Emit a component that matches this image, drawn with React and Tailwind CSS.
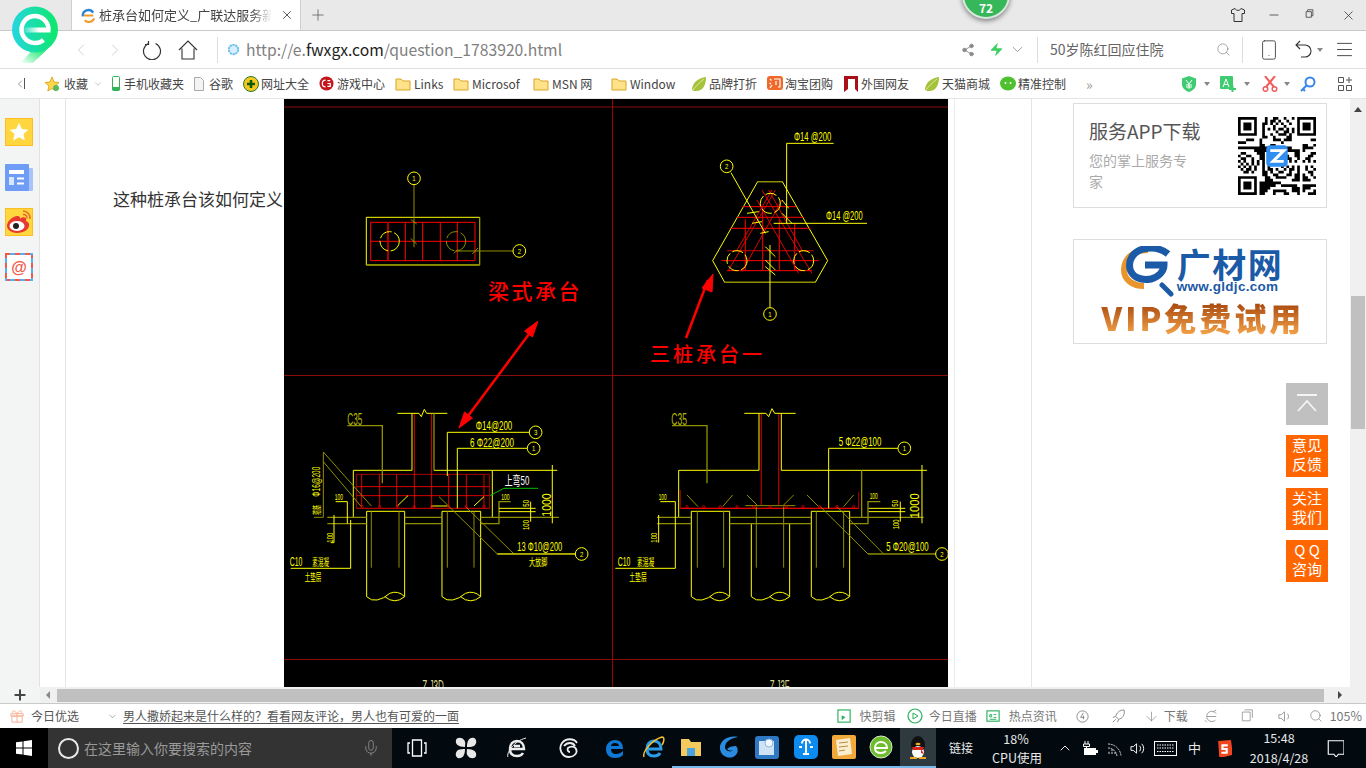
import React from "react";
import { ChevronLeft, ChevronRight, ChevronDown, Search, Plus, Minus, X, Mic, ChevronUp, Share2, Zap, Smartphone, Menu, ArrowDown } from "lucide-react";

const Y = "#ffff00";
const O = "#8f8f00";
const R = "#ff0000";
const D = "#a80000";

const Ic = ({ s = 16, w, h, vb = "0 0 16 16", children }) => (
  <svg width={w || s} height={h || s} viewBox={vb} fill="none" className="shrink-0">{children}</svg>
);

const Folder = () => (
  <Ic>
    <path d="M1 3h5l2 2h7v9H1z" fill="#ffe28a" stroke="#d9a520" />
  </Ic>
);
const Leaf = () => (
  <Ic>
    <path d="M1 14C1 7 7 2 15 1c0 8-3 14-10 14-2 0-3-.5-4-1z" fill="#a4c23a" />
    <path d="M2 14c3-4 6-7 11-11" stroke="#dfe99a" />
  </Ic>
);

const bookmarks = [
  { w: "w-[68px]", label: "收藏", gap: "ml-[4px]", caret: true, icon: <Ic><path d="M8 1l2 5 5 .5-4 3.500 1.200 5L8 12.500 3.800 15 5 10 1 6.500 6 6z" fill="#ffd84a" stroke="#e0a92a" /><circle cx="12" cy="12" r="3" fill="#5cb85c" /></Ic> },
  { w: "w-[82px]", label: "手机收藏夹", gap: "ml-[4px]", icon: <Ic w={8} h={15} vb="0 0 8 15"><rect x=".5" y=".5" width="7" height="14" rx="1" stroke="#2fb457" fill="#fff" /><rect x=".5" y="11" width="7" height="3.500" fill="#2fb457" /></Ic> },
  { w: "w-[49px]", label: "谷歌", gap: "ml-[5px]", icon: <Ic w={10} h={14} vb="0 0 10 14"><path d="M.5.5h6l3 3v10H.5z" fill="#f4f4f4" stroke="#aaa" /></Ic> },
  { w: "w-[76px]", label: "网址大全", gap: "ml-[2px]", icon: <Ic><circle cx="8" cy="8" r="7.500" fill="#f4c81d" stroke="#2a7a2a" /><path d="M8 4v8M4 8h8" stroke="#0b5a0b" strokeWidth="2.500" /></Ic> },
  { w: "w-[76px]", label: "游戏中心", gap: "ml-[3px]", icon: <Ic s={15} vb="0 0 16 16"><circle cx="8" cy="8" r="7.500" fill="#c4161c" /><path d="M7 4.500a3.500 3.500 0 1 0 0 7M9 5h3M9 8h3v3H9" stroke="#fff" strokeWidth="1.300" /></Ic> },
  { w: "w-[58px]", label: "Links", gap: "ml-[3px]", icon: <Folder /> },
  { w: "w-[80px]", label: "Microsof", gap: "ml-[3px]", icon: <Folder /> },
  { w: "w-[78px]", label: "MSN 网", gap: "ml-[3px]", icon: <Folder /> },
  { w: "w-[80px]", label: "Window", gap: "ml-[3px]", icon: <Folder /> },
  { w: "w-[76px]", label: "品牌打折", gap: "ml-[2px]", icon: <Leaf /> },
  { w: "w-[77px]", label: "淘宝团购", gap: "ml-[2px]", icon: <Ic><rect width="16" height="14" rx="3" fill="#f0692a" /><path d="M3 3l1.500 1.500M2.500 7L4 8M3 12l2-3M7 3h6v8h-2M9 5v4" stroke="#fff" strokeWidth="1.200" /></Ic> },
  { w: "w-[80px]", label: "外国网友", gap: "ml-[3px]", icon: <Ic w={14} h={16} vb="0 0 14 16"><path d="M0 0h14v16l-3-3V3H4v10l-4 3z" fill="#a8101a" /></Ic> },
  { w: "w-[76px]", label: "天猫商城", gap: "ml-[2px]", icon: <Leaf /> },
  { w: "w-[85px]", label: "精准控制", gap: "ml-[2px]", icon: <Ic><ellipse cx="8" cy="7.500" rx="8" ry="7" fill="#4fc02f" /><path d="M3 13l1-3 2 3z" fill="#4fc02f" /><circle cx="5.500" cy="7" r="1" fill="#fff" /><circle cx="10.500" cy="7" r="1" fill="#fff" /></Ic> },
];

const QR = () => {
  const n = 29;
  let d = "";
  const finder = (x, y) => (x < 7 && y < 7) || (x >= n - 7 && y < 7) || (x < 7 && y >= n - 7);
  const inF = (x, y) => (x < 8 && y < 8) || (x >= n - 8 && y < 8) || (x < 8 && y >= n - 8);
  for (let y = 0; y < n; y++) {
    for (let x = 0; x < n; x++) {
      let on = ((x * 7 + y * 13 + x * y * 3 + (x ^ y) * 5) % 7) < 3;
      if (inF(x, y)) {
        on = false;
        if (finder(x, y)) {
          const fx = x >= n - 7 ? x - (n - 7) : x;
          const fy = y >= n - 7 ? y - (n - 7) : y;
          on = fx === 0 || fx === 6 || fy === 0 || fy === 6 || (fx >= 2 && fx <= 4 && fy >= 2 && fy <= 4);
        }
      }
      if (on) d += `M${x} ${y}h1v1h-1z`;
    }
  }
  return (
    <svg width="78" height="78" viewBox="0 0 29 29" className="shrink-0">
      <path d={d} fill="#000" />
      <rect x="10.500" y="10.500" width="8" height="8" rx="1.500" fill="#2f8ef0" />
      <path d="M12 12.500h5l-4 4h4" stroke="#fff" strokeWidth="1.100" fill="none" />
    </svg>
  );
};

const CadText = ({ x, y, w, size = 40, fill = Y, rot, children }) => (
  <text
    x={x}
    y={y}
    fontSize={size}
    fill={fill}
    textLength={w}
    lengthAdjust="spacingAndGlyphs"
    transform={rot ? `rotate(-90 ${x} ${y})` : undefined}
    fontFamily="'Liberation Sans','Noto Sans CJK SC',sans-serif"
  >
    {children}
  </text>
);

const Bubble = ({ cx, cy, t }) => (
  <>
    <circle cx={cx} cy={cy} r="19" stroke={Y} strokeWidth="3" fill="none" />
    <CadText x={cx - 5} y={cy + 8} size={22} w={10}>{t}</CadText>
  </>
);

const pileEnd = (l, r) => {
  const m = (r - l) / 115;
  const X = (v) => l + v * m;
  return `M${X(0)} 650Q${X(14)} 664 ${X(32)} 660Q${X(52)} 656 ${X(70)} 640Q${X(95)} 630 ${X(115)} 650M${X(55)} 650Q${X(85)} 675 ${X(115)} 650`;
};

const Dots = ({ xs, y = 380 }) => xs.map((x) => <circle key={x} cx={x} cy={y} r="3.500" stroke={R} strokeWidth="2" fill="none" />);

const Drawing = () => (
  <svg width="664" height="588" viewBox="284 99 664 588" className="shrink-0 bg-black" fill="none">
    <path d="M284 107H948M284 375.500H948M284 659.500H948" stroke="#8a0c0c" />
    <path d="M612.500 99V687" stroke="#a00000" />

    {/* beam cap, plan */}
    <g transform="translate(284 100) scale(.3333)" strokeWidth="3">
      <path d="M247 352H587V495H247Z" stroke={Y} />
      <path d="M587 352V495H247" stroke={O} />
      <path d="M260 367H573V482H260ZM260 424H573M364 367V482M416 367V482M469 367V482M520 367V482" stroke={R} />
      <path d="M312 367V482" stroke={D} strokeWidth="6" />
      <circle cx="317" cy="424" r="29" stroke={Y} strokeDasharray="42 8" />
      <circle cx="516" cy="424" r="29" stroke={O} strokeDasharray="42 8" />
      <path d="M390 254V442M380 358L398 372M380 415L398 432M515 453H688M510 460L522 448M565 462L582 444" stroke={O} />
      <Bubble cx={390} cy={235} t="1" />
      <Bubble cx={706} cy={453} t="2" />
    </g>

    {/* three pile cap, plan */}
    <g transform="translate(612 100) scale(.3333)" strokeWidth="3">
      <path d="M437 245H511L647 482L610 547H338L302 482Z" stroke={Y} />
      <path d="M338 547H610M437 245H511" stroke={O} strokeWidth="4" />
      <path d="M392 320H553M375 352H575M355 385H595M328 482H620M345 512H600M400 358V510M452 320V510M502 360V510M548 370V510" stroke={R} />
      <path d="M345 452H605" stroke={D} strokeWidth="4" />
      <path d="M450 270L600 520M490 270L350 510M435 300L560 520M510 300L390 515M470 270L570 450M480 270L375 450" stroke="#e00000" />
      <circle cx="475" cy="310" r="30" stroke={Y} strokeDasharray="34 8" />
      <circle cx="375" cy="482" r="30" stroke={Y} strokeDasharray="34 8" />
      <circle cx="575" cy="482" r="30" stroke={Y} strokeDasharray="34 8" />
      <path d="M357 218L460 400M474 435V623M524 370V130H665M485 370H765M405 340L440 335M420 370L450 365M445 400L470 395M460 440L490 470M460 480L490 510M460 500L490 525M510 300L530 325M510 340L540 370" stroke={Y} />
      <Bubble cx={344} cy={199} t="2" />
      <Bubble cx={474} cy={642} t="1" />
      <CadText x={546} y={124} w={112} size={40}>Φ14 @200</CadText>
      <CadText x={642} y={360} w={110} size={40}>Φ14 @200</CadText>
    </g>

    {/* beam cap, section */}
    <g transform="translate(284 380) scale(.3333)" strokeWidth="3">
      <path d="M217 283H617V385M217 283V385" stroke={D} />
      <path d="M217 385H617M217 320H617M217 347H617M391 100V385M443 100V385M233 283V380M287 283V380M338 283V380M494 283V380M547 283V380M600 283V380" stroke="#dd0000" />
      <path d="M340 100H405L412 110L421 88L428 100H490" stroke={Y} />
      <path d="M384 100V271H208V412M450 271H625V412" stroke={Y} />
      <path d="M450 100V271" stroke={O} strokeWidth="4" />
      <path d="M248 394H362V650M248 394V650M474 394H590V650M474 394V650" stroke={Y} />
      <path d={pileEnd(248, 362)} stroke={Y} />
      <path d={pileEnd(474, 590)} stroke={Y} />
      <path d="M262 394V563M345 394V563M490 394V563M570 394V563" stroke={O} />
      <path d="M130 412H248M362 412H474M590 412H825M130 431H248M362 431H474M590 431H645V365H680" stroke={O} strokeWidth="4" />
      <path d="M20 565H200V420M190 431V365H155M150 405V488H140" stroke={Y} />
      <path d="M190 137H295V310" stroke={O} strokeWidth="4" />
      <path d="M490 288V157H736M520 385V205H730" stroke={Y} />
      <path d="M465 350L640 522H874M545 380L690 522M118 216L262 378M118 245L232 380M118 216V412H90" stroke={O} />
      <path d="M640 522H874M340 378L372 347M570 378L600 350M442 378H490" stroke={Y} />
      <path d="M805 255V430M625 271H820M740 365V425M645 385H755M645 395H755" stroke={Y} />
      <path d="M618 347L660 325H762" stroke="#00c000" />
      <CadText x={662} y={316} w={74} size={38} fill="#fff">上弯50</CadText>
      <CadText x={190} y={134} w={45} size={48} fill="#b8b800">C35</CadText>
      <CadText x={575} y={149} w={110} size={40}>Φ14@200</CadText>
      <CadText x={558} y={200} w={132} size={40}>6 Φ22@200</CadText>
      <CadText x={700} y={512} w={135} size={40}>13 Φ10@200</CadText>
      <CadText x={735} y={558} w={55} size={30}>大放脚</CadText>
      <CadText x={17} y={559} w={38} size={38}>C10</CadText>
      <CadText x={85} y={559} w={50} size={30}>素混凝</CadText>
      <CadText x={62} y={602} w={50} size={30}>土垫层</CadText>
      <CadText x={152} y={361} w={25} size={26}>100</CadText>
      <CadText x={652} y={361} w={25} size={26}>100</CadText>
      <CadText x={107} y={405} w={30} size={28} rot>箍筋</CadText>
      <CadText x={107} y={350} w={90} size={30} rot>Φ16@200</CadText>
      <CadText x={800} y={410} w={70} size={38} rot>1000</CadText>
      <CadText x={735} y={380} w={20} size={26} rot>50</CadText>
      <CadText x={735} y={450} w={30} size={26} rot>100</CadText>
      <CadText x={148} y={488} w={30} size={26} rot>100</CadText>
      <Bubble cx={755} cy={157} t="3" />
      <Bubble cx={749} cy={205} t="1" />
      <Bubble cx={893} cy={522} t="2" />
      <Dots xs={[235, 287, 340, 391, 443, 494, 547, 600]} />
      <CadText x={415} y={935} w={65} size={48} fill="#d8d890">Z J3D</CadText>
    </g>

    {/* three pile cap, section */}
    <g transform="translate(612 380) scale(.3333)" strokeWidth="3">
      <path d="M448 100V375M500 100V375" stroke={D} strokeWidth="4" />
      <path d="M205 330V385H740V335" stroke={D} />
      <path d="M205 385H740" stroke={R} />
      <path d="M397 100H462L470 110L480 86L488 100H551M441 100V271H200V412M508 100V271H945" stroke={Y} />
      <path d="M749 271V412M180 137H285V310" stroke={O} strokeWidth="4" />
      <path d={pileEnd(238, 353)} stroke={Y} />
      <path d={pileEnd(418, 533)} stroke={Y} />
      <path d={pileEnd(598, 713)} stroke={Y} />
      <path d="M238 394H353V650M238 394V650M418 430V650M533 430V650M598 394H713V650M598 394V650" stroke={Y} />
      <path d="M256 394V563M335 394V563M433 380V563M515 380V563M613 394V563M695 394V563" stroke={O} />
      <path d="M135 412H238M353 412H598M713 412H935M135 431H238M353 431H598M713 431H768V365H805" stroke={O} strokeWidth="4" />
      <path d="M10 565H190V365H145M140 405V488M650 385V205H858" stroke={Y} />
      <path d="M625 380L768 522H972M675 380L815 522" stroke={O} />
      <path d="M768 522H972M225 345L258 380M362 345L332 380M405 345L435 375M545 345L515 375M585 345L620 380M725 345L695 380M400 377H550" stroke={O} />
      <path d="M930 255V430M770 385H880M770 395H880M865 365V425" stroke={Y} />
      <Dots xs={[225, 275, 325, 375, 425, 475, 523, 573, 623, 675, 725]} />
      <Bubble cx={877} cy={205} t="1" />
      <Bubble cx={990} cy={522} t="2" />
      <CadText x={178} y={134} w={47} size={50} fill="#b8b800">C35</CadText>
      <CadText x={680} y={198} w={128} size={40}>5 Φ22@100</CadText>
      <CadText x={823} y={514} w={127} size={40}>5 Φ20@100</CadText>
      <CadText x={17} y={559} w={38} size={38}>C10</CadText>
      <CadText x={75} y={559} w={52} size={30}>素混凝</CadText>
      <CadText x={52} y={602} w={52} size={30}>土垫层</CadText>
      <CadText x={140} y={361} w={24} size={26}>100</CadText>
      <CadText x={773} y={358} w={24} size={26}>100</CadText>
      <CadText x={922} y={415} w={75} size={38} rot>1000</CadText>
      <CadText x={858} y={380} w={20} size={26} rot>50</CadText>
      <CadText x={860} y={448} w={30} size={26} rot>100</CadText>
      <CadText x={136} y={488} w={30} size={26} rot>100</CadText>
      <CadText x={473} y={935} w={60} size={48} fill="#d8d890">Z J3F</CadText>
    </g>

    {/* red notes */}
    <path d="M529 334L468 416" stroke={R} strokeWidth="2.500" />
    <path d="M538 321L532.500 337L524.500 331ZM459 428L472.500 418L464.500 412Z" fill={R} stroke={R} />
    <path d="M686 338L708 280" stroke={R} strokeWidth="2.500" />
    <path d="M713 274L712 292L702 288Z" fill={R} stroke={R} />
    <text x="488" y="299" fontSize="21" letterSpacing="2.500" fontWeight="500" fill={R} fontFamily="'Noto Sans CJK SC',sans-serif">梁式承台</text>
    <text x="650" y="362" fontSize="20" letterSpacing="3" fontWeight="500" fill={R} fontFamily="'Noto Sans CJK SC',sans-serif">三桩承台一</text>
  </svg>
);

export default function App() {
  return (
    <div className="relative flex h-screen w-full flex-col overflow-hidden bg-white font-['Noto_Sans_CJK_SC','Noto_Sans',sans-serif] text-[12px] text-[#444]">
      {/* tab strip */}
      <div className="flex h-[31px] shrink-0 items-center border-b border-[#c9c9c9] bg-[#e9e9e9]">
        <div className="ml-[71px] flex h-[30px] w-[230px] items-center self-start border-x border-[#cfcfcf] bg-white pl-[9px]">
          <Ic s={15}>
            <path d="M2 9a6 6 0 0 1 11-4" stroke="#2a84d8" strokeWidth="2.500" />
            <path d="M3 8h10M14 11a6 6 0 0 1-10 2" stroke="#f09a2a" strokeWidth="2.200" />
          </Ic>
          <span className="ml-[3px] w-[173px] overflow-hidden whitespace-nowrap text-[13px] leading-[30px] text-[#444] [mask-image:linear-gradient(90deg,#000_88%,transparent)]">桩承台如何定义_广联达服务新干线</span>
          <X size={14} strokeWidth={1.500} className="ml-[8px] text-[#444]" />
        </div>
        <Plus size={18} strokeWidth={1} className="ml-[8px] text-[#555]" />
        <div className="ml-auto flex items-center pr-[10px]">
          <Ic s={16}><path d="M5 1.500L1.500 3v3.500H4v8h8v-8h2.500V3L11 1.500C10 4 6 4 5 1.500z" stroke="#333" /></Ic>
          <Minus size={14} strokeWidth={1.300} className="ml-[21px] text-[#333]" />
          <div className="ml-[24px]"><Ic s={12}><path d="M3.500 3V1h7v8H8.500M1.500 3.500h7v7.500h-7z" stroke="#333" /></Ic></div>
          <X size={15} strokeWidth={1.200} className="ml-[24px] text-[#333]" />
        </div>
      </div>

      {/* address bar */}
      <div className="flex h-[38px] shrink-0 items-center border-b border-[#e0e0e0] bg-white">
        <ChevronLeft size={20} strokeWidth={1} className="ml-[71px] text-[#c8c8c8]" />
        <ChevronRight size={20} strokeWidth={1} className="ml-[14px] text-[#c8c8c8]" />
        <div className="ml-[17px]"><Ic s={20} vb="0 0 20 20"><path d="M6.500 3.500a8.500 8.500 0 1 0 7 0M6.500 1v3.500H3" stroke="#333" strokeWidth="1.200" /></Ic></div>
        <div className="ml-[15px]"><Ic s={22} vb="0 0 22 22"><path d="M2 11L11 2l9 9M5 9.500V20h12V9.500" stroke="#333" strokeWidth="1.100" /></Ic></div>
        <div className="ml-[18px] h-[26px] w-px bg-[#ddd]" />
        <div className="ml-[8px]"><Ic s={15}><circle cx="8" cy="8" r="5" fill="#d7efff" stroke="#6cc0ef" strokeWidth="2" strokeDasharray="2.500 .6" /></Ic></div>
        <div className="ml-[5px] whitespace-nowrap text-[15.7px] text-[#808080]">http://e.<span className="text-[#222]">fwxgx.com</span>/question_1783920.html</div>
        <div className="ml-auto flex items-center pr-[11px]">
          <Share2 size={14} fill="#888" strokeWidth={1.500} className="text-[#888]" />
          <Zap size={15} fill="#3fcf60" strokeWidth={0} className="ml-[14px]" />
          <ChevronDown size={17} strokeWidth={1} className="ml-[5px] text-[#777]" />
          <div className="ml-[11px] h-[26px] w-px bg-[#ddd]" />
          <div className="ml-[12px] w-[166px] whitespace-nowrap text-[14px] text-[#666]">50岁陈红回应住院</div>
          <Search size={15} strokeWidth={1} className="text-[#777]" />
          <div className="ml-[11px] h-[26px] w-px bg-[#ddd]" />
          <Smartphone size={22} strokeWidth={1} className="ml-[15px] text-[#444]" />
          <div className="ml-[14px]"><Ic s={20} vb="0 0 20 20"><path d="M6 1L2 5l4 4M2 5h9a6 6 0 0 1 0 12H7" stroke="#333" strokeWidth="1.100" /></Ic></div>
          <div className="ml-[3px] h-0 w-0 border-x-[3px] border-t-[4px] border-x-transparent border-t-[#888]" />
          <Menu size={21} strokeWidth={1} className="ml-[11px] text-[#333]" />
        </div>
      </div>

      {/* favourites */}
      <div className="flex h-[30px] shrink-0 items-center border-b border-[#e5e5e5] bg-white">
        <div className="flex w-[44px] items-center pl-[14px] text-[#555]">
          <ChevronLeft size={12} strokeWidth={1.200} />
          <div className="ml-[-2px] h-[11px] w-px bg-[#555]" />
        </div>
        {bookmarks.map((b) => (
          <div key={b.label} className={`flex shrink-0 items-center ${b.w}`}>
            {b.icon}
            <span className={`whitespace-nowrap text-[#444] ${b.gap}`}>{b.label}</span>
            {b.caret && <ChevronDown size={10} strokeWidth={1} className="ml-[5px] text-[#777]" />}
          </div>
        ))}
        <span className="w-[96px] pl-[1px] text-[14px] leading-none text-[#999]">»</span>
        <Ic s={16}><path d="M8 0l7 2.500V8c0 4-3 6.500-7 8-4-1.500-7-4-7-8V2.500z" fill="#3fcb6f" /><path d="M5 4l3 4 3-4M8 8v5M5 9h6M5 11h6" stroke="#fff" /></Ic>
        <div className="ml-[7px] h-0 w-0 border-x-[3px] border-t-[4px] border-x-transparent border-t-[#888]" />
        <div className="ml-[10px]"><Ic s={16}><rect width="13" height="13" rx="1" fill="#3fcb6f" /><path d="M3 11L6 3l3 8M4 8.500h4" stroke="#fff" /><path d="M9 13h7M12.500 9.500v6.500" stroke="#3fcb6f" strokeWidth="2" /></Ic></div>
        <div className="ml-[8px] h-0 w-0 border-x-[3px] border-t-[4px] border-x-transparent border-t-[#888]" />
        <div className="ml-[12px]"><Ic s={16}><path d="M3 0l9 11M13 0L4 11" stroke="#f25b5b" strokeWidth="2" /><circle cx="3.500" cy="13" r="2.300" stroke="#f25b5b" strokeWidth="1.500" /><circle cx="12.500" cy="13" r="2.300" stroke="#f25b5b" strokeWidth="1.500" /></Ic></div>
        <div className="ml-[6px] h-0 w-0 border-x-[3px] border-t-[4px] border-x-transparent border-t-[#888]" />
        <div className="ml-[10px]"><Ic s={16}><circle cx="10" cy="6" r="4.500" stroke="#3a86e8" strokeWidth="2" /><path d="M7 9l-6 6M3 13l2 2" stroke="#3a86e8" strokeWidth="2" /></Ic></div>
        <div className="ml-[21px]"><Ic s={16}><path d="M1.500 1.500h5v5h-5zM1.500 9.500h5v5h-5zM9.500 9.500h5v5h-5zM12 1v6M9 4h6" stroke="#555" /></Ic></div>
      </div>

      {/* page */}
      <div className="relative flex min-h-0 flex-1">
        <div className="flex w-[40px] shrink-0 flex-col items-center border-r border-[#e2e2e2] bg-[#f3f5f5] pr-[2px] pt-[19px]">
          <div className="flex h-[28px] w-[28px] items-center justify-center border border-[#fbbf24] bg-[#ffd63d]">
            <Ic s={20}><path d="M8 .5l2.300 5 5.200.6-3.900 3.500 1.100 5.200L8 12.200l-4.700 2.600 1.100-5.200L.5 6.100l5.200-.6z" fill="#fff" /></Ic>
          </div>
          <div className="mt-[18px]">
            <Ic w={28} h={27} vb="0 0 28 27">
              <rect x="22" y="4" width="6" height="23" rx="1" fill="#a9c4fa" />
              <rect width="24" height="27" rx="1" fill="#6f9df5" />
              <rect x="4" y="6" width="15" height="4" fill="#fff" />
              <rect x="4" y="13" width="5" height="8" fill="#d8e6ff" />
              <path d="M12 14.500h7M12 19.500h7" stroke="#fff" strokeWidth="2" />
            </Ic>
          </div>
          <div className="mt-[17px] flex h-[28px] w-[28px] items-center justify-center border border-[#fbbf24] bg-[#ffd63d]">
            <Ic s={26} vb="0 0 26 26">
              <path d="M11 7C5 8 1 13 1 17c0 4 5 7 10 7 7 0 13-4 12-9-.5-2-2-2.500-3-3 1-3-1-4.500-4-3.500l-2 1c0-2-1-2.500-3-2.500z" fill="#e6392f" />
              <ellipse cx="11" cy="17" rx="7.500" ry="5" fill="#fff" />
              <circle cx="10" cy="17" r="3" fill="#222" />
              <path d="M17 2a7 7 0 0 1 7 8M17 5.500a3.500 3.500 0 0 1 4 4" stroke="#e6692f" strokeWidth="1.500" />
            </Ic>
          </div>
          <div className="mt-[17px]">
            <Ic s={28} vb="0 0 28 28">
              <rect x=".5" y=".5" width="27" height="27" fill="#fff" />
              <path d="M0 1H28M0 27H28M1 0V28M27 0V28" stroke="#ef5a4c" strokeWidth="2" strokeDasharray="5 5" />
              <path d="M0 1H28M0 27H28M1 0V28M27 0V28" stroke="#58aef0" strokeWidth="2" strokeDasharray="5 5" strokeDashoffset="-5" />
              <text x="14" y="20" textAnchor="middle" fontSize="16" fontWeight="700" fill="#ef5a4c" fontFamily="'Liberation Sans',sans-serif">@</text>
            </Ic>
          </div>
        </div>
        <div className="w-[26px] shrink-0 border-r border-[#e5e5e5]" />
        <div className="flex w-[889px] shrink-0 border-r border-[#ececec] pl-[47px]">
          <div className="w-[171px] shrink-0 whitespace-nowrap pt-[88px] text-[17px] leading-[24px] text-[#333]">这种桩承台该如何定义</div>
          <Drawing />
        </div>
        <div className="w-[77px] shrink-0 border-r border-[#e5e5e5]" />
        <div className="flex-1 pl-[41px] pt-[4px]">
          <div className="flex h-[105px] w-[254px] border border-[#dddddd] pl-[15px] pt-[13px]">
            <div className="w-[149px] shrink-0">
              <div className="whitespace-nowrap text-[19px] leading-[28px] text-[#555]">服务APP下载</div>
              <div className="mt-[5px] w-[100px] text-[14px] leading-[21px] text-[#aaa]">您的掌上服务专家</div>
            </div>
            <QR />
          </div>
          <div className="mt-[31px] flex h-[105px] w-[254px] flex-col items-center border border-[#dddddd] pt-[6px]">
            <div className="flex items-start pl-[4px]">
              <Ic w={54} h={51} vb="0 0 54 51">
                <path d="M27 4C13 4 3 12 3 24c0 10 9 16 20 16" stroke="#e8962c" strokeWidth="6" />
                <path d="M47 8C40 2 30 1 22 3 12 6 7 14 9 23c2 8 11 12 21 10 8-2 13-8 13-14H24" stroke="#1b5aa6" strokeWidth="7" />
                <path d="M41 39l9 9" stroke="#1b5aa6" strokeWidth="5" strokeLinecap="round" />
              </Ic>
              <div className="ml-[2px] flex flex-col items-start">
                <span className="whitespace-nowrap text-[34px] font-bold leading-[36px] tracking-[1.500px] text-[#1b5aa6]">广材网</span>
                <span className="mt-[-2px] whitespace-nowrap font-['Liberation_Sans',sans-serif] text-[13.5px] font-bold leading-[14px] tracking-[.3px] text-[#1b5aa6]">www.gldjc.com</span>
              </div>
            </div>
            <div className="mt-[1px] whitespace-nowrap bg-gradient-to-b from-[#9c3a00] to-[#f6a64a] bg-clip-text pl-[6px] text-[32px] font-black leading-[38px] tracking-[3px] text-transparent">VIP免费试用</div>
          </div>
        </div>
        <div className="relative w-[16px] shrink-0 bg-[#f0f0f0]">
          <div className="mx-auto mt-[8px] h-0 w-0 border-x-[4px] border-b-[5px] border-x-transparent border-b-[#444]" />
          <div className="absolute left-px top-[197px] h-[133px] w-[14px] bg-[#c0c0c0]" />
        </div>

        {/* floating buttons */}
        <div className="absolute right-[38px] top-[284px] flex w-[42px] flex-col text-center text-[15px] leading-[19px] text-white">
          <div className="flex h-[42px] items-center justify-center bg-[#c0c0c0]">
            <Ic s={24} vb="0 0 24 24"><path d="M2 3h20M3 19L12 9l9 10" stroke="#f4f4f4" strokeWidth="1.800" /></Ic>
          </div>
          <div className="mt-[10px] h-[42px] bg-[#ff6600]">意见<br />反馈</div>
          <div className="mt-[11px] h-[42px] bg-[#ff6600]">关注<br />我们</div>
          <div className="mt-[10px] h-[42px] bg-[#ff6600]">Q Q<br />咨询</div>
        </div>
      </div>

      {/* horizontal scrollbar */}
      <div className="flex h-[17px] shrink-0 items-center border-b border-[#c9c9c9] bg-white">
        <div className="flex h-[16px] w-[40px] items-center justify-center bg-[#f3f5f5]">
          <Plus size={16} strokeWidth={3} className="text-[#444]" />
        </div>
        <div className="flex h-[16px] flex-1 items-center bg-[#f0f0f0]">
          <div className="ml-[6px] h-0 w-0 border-y-[4px] border-r-[4px] border-y-transparent border-r-[#888]" />
          <div className="ml-[7px] h-[13px] w-[1267px] bg-[#c0c0c0]" />
          <div className="ml-[14px] h-0 w-0 border-y-[4px] border-l-[4px] border-y-transparent border-l-[#444]" />
        </div>
      </div>

      {/* status bar */}
      <div className="flex h-[24px] shrink-0 items-center bg-white text-[#555]">
        <div className="ml-[10px]">
          <Ic s={15}><path d="M1 5h13v2.500H1zM2 7.500h11V14H2zM7.500 5v9M7.500 5C5 1 2 1 3 4M7.500 5C10 1 13 1 12 4" stroke="#f5ad8d" /></Ic>
        </div>
        <span className="ml-[6px] w-[48px] whitespace-nowrap">今日优选</span>
        <ChevronDown size={11} strokeWidth={1} className="ml-[28px] text-[#555]" />
        <span className="ml-[5px] whitespace-nowrap underline underline-offset-2">男人撒娇起来是什么样的？看看网友评论，男人也有可爱的一面</span>
        <div className="ml-auto flex items-center pr-[4px] text-[#777]">
          <Ic s={15}><rect x="1" y="1" width="13" height="13" stroke="#25b05a" strokeWidth="1.200" /><path d="M5 4v3l4 1.500L5 12z" fill="#25b05a" /></Ic>
          <span className="ml-[8px] whitespace-nowrap">快剪辑</span>
          <div className="ml-[11px]"><Ic s={16}><circle cx="8" cy="8" r="7" stroke="#25b05a" strokeWidth="1.200" /><path d="M6 5l5 3-5 3z" stroke="#25b05a" /></Ic></div>
          <span className="ml-[6px] whitespace-nowrap">今日直播</span>
          <div className="ml-[9px]"><Ic s={15}><rect x="1" y="2" width="13" height="11" stroke="#25b05a" strokeWidth="1.200" /><path d="M4 6h2v2.500H4zM8 6h3M8 9h3M4 11h7" stroke="#25b05a" /></Ic></div>
          <span className="ml-[8px] whitespace-nowrap">热点资讯</span>
          <div className="ml-[18px]"><Ic s={15}><circle cx="8" cy="8" r="6" stroke="#888" /><path d="M9 4L6 9h4M9 7v4" stroke="#888" /></Ic></div>
          <div className="ml-[21px]"><Ic s={15}><path d="M14 1c-5 0-8 3-9 7l3 3c4-1 7-4 6-10zM5 8L2 9M8 11l-1 3M2 14l3-3" stroke="#888" /></Ic></div>
          <ArrowDown size={15} strokeWidth={1} className="ml-[18px] text-[#777]" />
          <span className="ml-[5px] whitespace-nowrap">下载</span>
          <div className="ml-[16px]"><Ic s={15}><path d="M3 8h10M13 5A5.500 5.500 0 1 0 12 12M13 1L10 3M3 14L1 12" stroke="#999" /></Ic></div>
          <div className="ml-[22px]"><Ic s={14}><path d="M1.500 3.500h9v10h-9zM4 1h9v9" stroke="#999" /></Ic></div>
          <div className="ml-[22px]"><Ic s={15}><path d="M2 6v4h2.500L8 13V3L4.500 6zM11 5a4 4 0 0 1 0 6" stroke="#999" /></Ic></div>
          <Search size={14} strokeWidth={1} className="ml-[17px] text-[#666]" />
          <span className="ml-[7px] whitespace-nowrap text-[12.5px]">105%</span>
        </div>
      </div>

      {/* taskbar */}
      <div className="flex h-[40px] shrink-0 items-stretch bg-[#020a10] text-[#e8e8e8]">
        <div className="flex w-[48px] items-center justify-center bg-black">
          <Ic s={16}><path d="M0 2.300L6.500 1.400v6H0zM7.500 1.200L16 0v7.400H7.500zM0 8.500h6.500v6.100L0 13.700zM7.500 8.500H16V16l-8.500-1.200z" fill="#fff" /></Ic>
        </div>
        <div className="flex w-[344px] items-center bg-[#333333] text-[#999]">
          <div className="ml-[10px] h-[21px] w-[21px] rounded-full border-[2.500px] border-[#e8e8e8]" />
          <span className="ml-[5px] text-[14px]">在这里输入你要搜索的内容</span>
          <Mic size={18} strokeWidth={1} className="ml-auto mr-[12px] text-[#999]" />
        </div>
        <div className="flex w-[49px] items-center justify-center">
          <Ic s={20} vb="0 0 20 20"><path d="M5.500 2h9v16h-9zM3 5H1v10h2M17 5h2v10h-2" stroke="#fff" strokeWidth="1.300" /></Ic>
        </div>
        <div className="flex w-[50px] items-center justify-center">
          <Ic s={22} vb="0 0 22 22"><path d="M10 10C3 10 0 7 1 3c1-3 6-3 8 0 2 2 1 5 1 7zM12 10c0-7 3-10 7-9 3 1 3 6 0 8-2 1-5 1-7 1zM12 12c7 0 10 3 9 7-1 3-6 3-8 0-2-2-1-5-1-7zM10 12c0 7-3 10-7 9-3-1-3-6 0-8 2-1 5-1 7-1z" fill="#e8e8e8" /></Ic>
        </div>
        <div className="flex w-[52px] items-center justify-center">
          <Ic s={24} vb="0 0 24 24"><path d="M5 13h14c0-5-3-8-7-8s-7 3-7 8c0 5 3 7 7 7 3 0 5-1 6-3M9 10h6" stroke="#eee" strokeWidth="2.500" /><path d="M3 21C1 17 9 5 21 2" stroke="#eee" /></Ic>
        </div>
        <div className="flex w-[51px] items-center justify-center">
          <Ic s={22} vb="0 0 22 22"><path d="M19 6C16 1 8 1 4 6c-4 6 0 14 7 14 5 0 9-4 7-8-1-3-6-3-8-1-1 2 0 4 2 4M6 9c3-4 9-4 11 0" stroke="#eee" strokeWidth="1.800" /></Ic>
        </div>
        <div className="flex w-[42px] items-center justify-center">
          <Ic s={22} vb="0 0 22 22"><path d="M3 12h16c0-6-3-9-8-9S2 7 2 12c0 6 4 9 9 9 4 0 6-1 8-3v-4c-2 2-4 3-7 3-3 0-5-2-5-5zM7 9c0-2 2-3 4-3s4 1 4 3z" fill="#0f78d4" fillRule="evenodd" /></Ic>
        </div>
        <div className="flex w-[36px] items-center justify-center">
          <Ic s={26} vb="0 0 26 26"><path d="M7 14h13c0-5-3-8-7-8s-7 3-7 8 3 7 7 7c3 0 5-1 6-3" stroke="#2c9be8" strokeWidth="3" /><path d="M3 22C1 17 11 5 21 2c3 0 2 5 0 8" stroke="#f3c22a" strokeWidth="1.500" /></Ic>
        </div>
        <div className="flex w-[38px] items-center justify-center border-b-2 border-[#76b9ed]">
          <Ic s={24} vb="0 0 24 24"><path d="M2 4h8l2 3h10v14H2z" fill="#f4c95d" /><rect x="8" y="13" width="8" height="8" fill="#4aa3df" /></Ic>
        </div>
        <div className="flex w-[38px] items-center justify-center border-b-2 border-[#76b9ed]">
          <Ic s={26} vb="0 0 26 26"><path d="M22 3C12 1 3 7 4 15c1 7 8 10 13 8 5-2 6-8 3-11-4 0-7 1-9 3 2 2 5 2 6 1-2 3-8 1-8-3 0-6 7-9 13-10z" fill="#2a8be0" /></Ic>
        </div>
        <div className="flex w-[38px] items-center justify-center border-b-2 border-[#76b9ed]">
          <Ic s={26} vb="0 0 26 26"><rect x="1" y="2" width="24" height="23" rx="3" fill="#2f78c4" /><rect x="5" y="7" width="15" height="14" fill="#cfe3f5" /><circle cx="15" cy="9" r="4" fill="#f4f8fc" stroke="#89b6de" /></Ic>
        </div>
        <div className="flex w-[39px] items-center justify-center border-b-2 border-[#76b9ed]">
          <Ic s={26} vb="0 0 26 26"><rect x="1" y="1" width="24" height="24" rx="5" fill="#0d8cf0" /><path d="M13 6v14M9 9.500a4 4 0 0 1 8 0M6 13h3M17 13h3M10 20h6" stroke="#fff" strokeWidth="2" /></Ic>
        </div>
        <div className="flex w-[37px] items-center justify-center border-b-2 border-[#76b9ed]">
          <Ic s={26} vb="0 0 26 26"><rect x="1" y="1" width="24" height="24" rx="2" fill="#f2a93b" /><path d="M5 6l14-2 2 16-14 2z" fill="#f9efd0" /><path d="M8 9l9-1M8 13l9-1M8 17l6-1" stroke="#b98b3c" /></Ic>
        </div>
        <div className="flex w-[38px] items-center justify-center border-b-2 border-[#76b9ed]">
          <Ic s={26} vb="0 0 26 26"><circle cx="13" cy="13" r="11" fill="#6dbd2e" stroke="#d9e9c5" /><path d="M7 14h12c0-4-3-6-6-6s-6 2-6 6 3 5 6 5c2 0 4-1 5-2" stroke="#fff" strokeWidth="2" /></Ic>
        </div>
        <div className="flex w-[36px] items-center justify-center border-b-2 border-[#76b9ed] bg-[#2e3a40]">
          <Ic s={26} vb="0 0 26 26"><ellipse cx="13" cy="11" rx="7" ry="9" fill="#111" /><ellipse cx="13" cy="18" rx="6" ry="6" fill="#fff" /><path d="M7 13h12l-1 3H8z" fill="#d8231f" /><path d="M16 15l3 5-3-1z" fill="#d8231f" /><path d="M5 24h7M14 24h7" stroke="#f0a820" strokeWidth="2" /><ellipse cx="13" cy="10" rx="2.500" ry="1.300" fill="#f0a820" /></Ic>
        </div>
        <span className="ml-[13px] w-[24px] self-center whitespace-nowrap text-[12px]">链接</span>
        <div className="ml-[19px] w-[48px] self-center text-center text-[12.5px] leading-[19px] whitespace-nowrap">18%<br />CPU使用</div>
        <ChevronUp size={16} strokeWidth={1.500} className="ml-[17px] self-center" />
        <div className="ml-[9px] self-center"><Ic s={16}><path d="M3 1v3M6 1v3M1.500 4h6v2.500h-6zM4.500 6.500V9" stroke="#fff" /><rect x="2" y="8" width="12" height="7" fill="#fff" /><rect x="14" y="10" width="2" height="3" fill="#fff" /></Ic></div>
        <div className="ml-[9px] self-center"><Ic s={16}><path d="M2 14V11M5 14V9M1 8a9 9 0 0 1 9 9M1 4a13 13 0 0 1 13 12M8 14v-2" stroke="#d8d8d8" strokeDasharray="2 .8" /></Ic></div>
        <div className="ml-[7px] self-center"><Ic s={15}><path d="M1 6v4h2.500L7 13V3L3.500 6zM10 5a4 4 0 0 1 0 6M12.500 3a7 7 0 0 1 0 10" stroke="#fff" /></Ic></div>
        <div className="ml-[9px] self-center"><Ic w={23} h={15} vb="0 0 23 15"><rect x=".5" y=".5" width="22" height="14" stroke="#fff" /><path d="M3 4h17M3 7h17M3 10.500h17" stroke="#fff" strokeDasharray="1.500 1" /></Ic></div>
        <span className="ml-[11px] w-[12px] self-center text-[13px]">中</span>
        <div className="ml-[15px] self-center"><Ic s={17}><path d="M3 1l12-1 2 14-13 3z" fill="#f0451f" /><path d="M12 5H7v3.500h4V12H6" stroke="#fff" strokeWidth="2" /></Ic></div>
        <div className="ml-[17px] w-[60px] self-center text-center text-[12.5px] leading-[20px] whitespace-nowrap">15:48<br />2018/4/28</div>
        <div className="ml-[17px] self-center"><Ic s={18}><path d="M2 1.500h14v12h-5L9 16l-2-2.500H2z" stroke="#fff" /></Ic></div>
      </div>

      {/* browser logo */}
      <div className="absolute left-[10px] top-[6px]">
        <svg width="50" height="58" viewBox="0 0 50 58" fill="none">
          <defs>
            <linearGradient id="ring" x1="0" y1="0" x2="1" y2="0">
              <stop offset="0" stopColor="#24d6df" />
              <stop offset="1" stopColor="#0ee86a" />
            </linearGradient>
            <linearGradient id="tail" x1="1" y1="0" x2="0" y2="1">
              <stop offset=".3" stopColor="#0ee86a" />
              <stop offset="1" stopColor="#0ee86a" stopOpacity="0" />
            </linearGradient>
            <linearGradient id="bar" x1="0" y1="0" x2="1" y2="0">
              <stop offset="0" stopColor="#fff" stopOpacity="0" />
              <stop offset=".6" stopColor="#fff" />
            </linearGradient>
          </defs>
          <path d="M43 35C36 46 30 50 23 57H10C18 50 22 44 24 40z" fill="url(#tail)" />
          <circle cx="25" cy="23.500" r="23" fill="url(#ring)" />
          <path d="M38.500 24A13.500 13.500 0 1 0 33.500 34" stroke="#fff" strokeWidth="4.500" />
          <rect x="12" y="21.500" width="28.500" height="5" fill="url(#bar)" />
        </svg>
      </div>

      {/* score badge */}
      <div className="absolute left-[962px] top-[-29px] flex h-[48px] w-[48px] items-end justify-center rounded-full border-2 border-[#d8e8dc] bg-[#36b75a] pb-[1px] text-[12px] font-bold leading-[16px] text-white shadow-[0_2px_5px_rgba(0,0,0,.45)]">72</div>
    </div>
  );
}
